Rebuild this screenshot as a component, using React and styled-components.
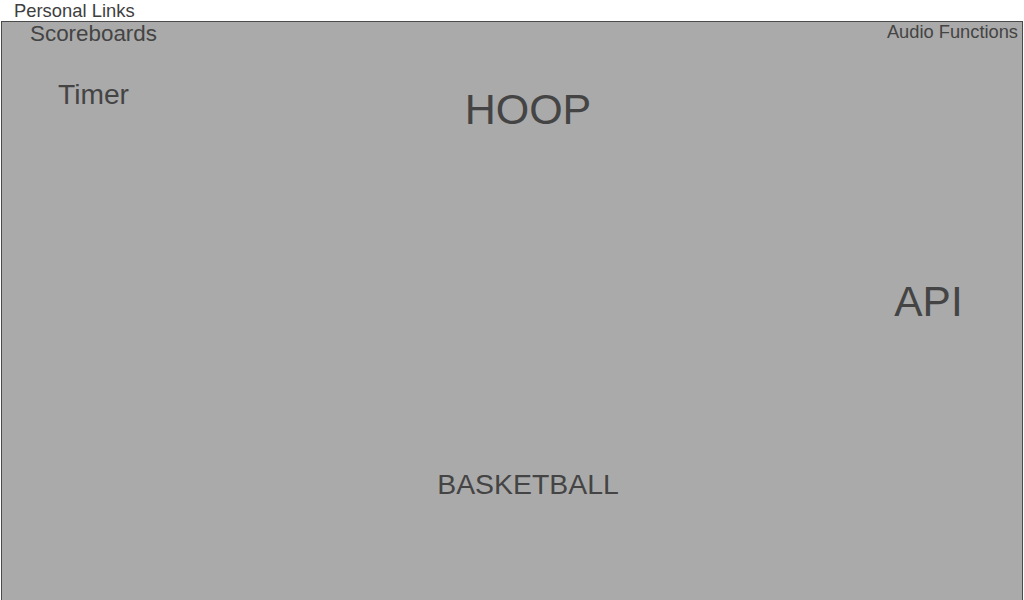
import React from "react";
import styled, { createGlobalStyle } from "styled-components";

const GlobalStyle = createGlobalStyle`
  html, body {
    margin: 0;
    padding: 0;
    overflow: hidden;
    background: #ffffff;
    font-family: "Liberation Sans", Arial, sans-serif;
  }
`;

const Page = styled.div`
  width: 1024px;
  height: 600px;
  display: flex;
  flex-direction: column;
`;

const TopLink = styled.div`
  font-size: 18.4px;
  color: #3e3e3e;
  padding-left: 14px;
  height: 21px;
  line-height: 21px;
  white-space: nowrap;
`;

const Panel = styled.div`
  margin-left: 1px;
  width: 1020px;
  height: 600px;
  background: #aaaaaa;
  border: 1px solid #4a4a4a;
  border-bottom: none;
  display: flex;
  flex-direction: column;
  color: #444444;
`;

const TopBar = styled.div`
  display: flex;
  justify-content: space-between;
  align-items: flex-start;
  padding: 0 4px 0 28px;
  margin-top: -1px;
`;

const Label = styled.div`
  font-size: ${(p) => p.size}px;
  line-height: normal;
  white-space: nowrap;
`;

const Stage = styled.div`
  display: grid;
  grid-template-columns: 200px 1fr 200px;
  grid-template-rows: 190px 191px auto;
  padding-left: 32px;
`;

const Timer = styled(Label)`
  grid-column: 1;
  grid-row: 1;
  margin: 31px 0 0 24px;
  justify-self: start;
`;

const Title = styled(Label)`
  grid-column: 2;
  grid-row: ${(p) => p.row};
  justify-self: center;
  align-self: start;
  margin-top: ${(p) => p.top}px;
`;

const Api = styled(Label)`
  grid-column: 3;
  grid-row: 2;
  justify-self: center;
  margin: ${(p) => p.top}px 0 0 13px;
`;

export default function App() {
  return (
    <>
      <GlobalStyle />
      <Page>
        <TopLink>Personal Links</TopLink>
        <Panel>
          <TopBar>
            <Label size={22.4}>Scoreboards</Label>
            <Label size={18.3}>Audio Functions</Label>
          </TopBar>
          <Stage>
            <Timer size={28.2}>Timer</Timer>
            <Title size={43} row={1} top={38}>
              HOOP
            </Title>
            <Api size={42.4} top={41}>
              API
            </Api>
            <Title size={28.4} row={3} top={40}>
              BASKETBALL
            </Title>
          </Stage>
        </Panel>
      </Page>
    </>
  );
}
